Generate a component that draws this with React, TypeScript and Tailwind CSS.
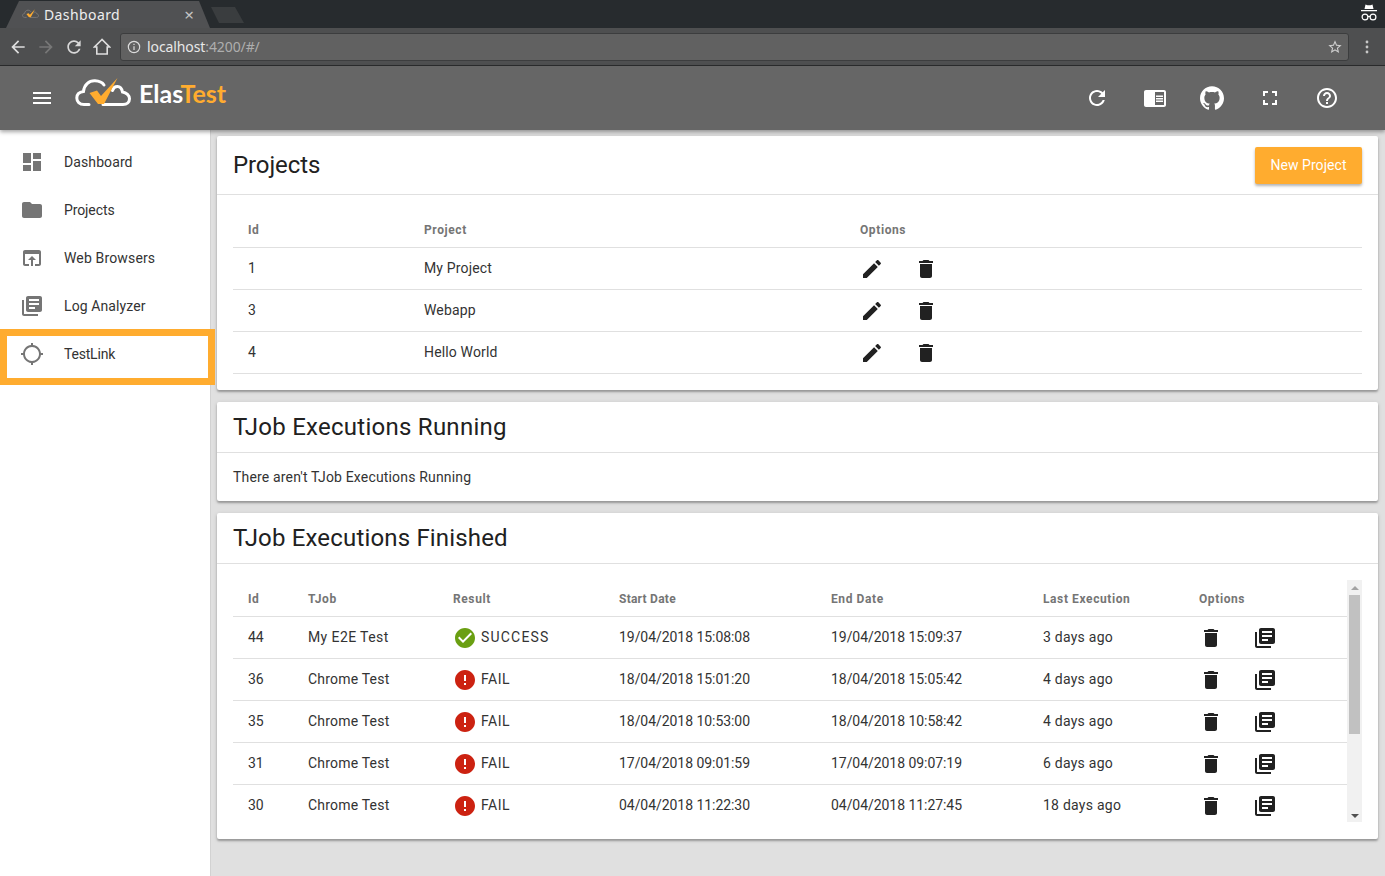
import type { ReactNode } from 'react'

const P = {
  menu: 'M3 18h18v-2H3v2zm0-5h18v-2H3v2zm0-7v2h18V6H3z',
  dashboard: 'M3 13h8V3H3v10zm0 8h8v-6H3v6zm10 0h8V11h-8v10zm0-18v6h8V3h-8z',
  folder: 'M10 4H4c-1.1 0-1.99.9-1.99 2L2 18c0 1.1.9 2 2 2h16c1.1 0 2-.9 2-2V8c0-1.1-.9-2-2-2h-8l-2-2z',
  browser: 'M19 4H5c-1.11 0-2 .9-2 2v12c0 1.1.89 2 2 2h4v-2H5V8h14v10h-4v2h4c1.1 0 2-.9 2-2V6c0-1.1-.89-2-2-2zm-7 6l-4 4h3v6h2v-6h3l-4-4z',
  library: 'M4 6H2v14c0 1.1.9 2 2 2h14v-2H4V6zm16-4H8c-1.1 0-2 .9-2 2v12c0 1.1.9 2 2 2h12c1.1 0 2-.9 2-2V4c0-1.1-.9-2-2-2zm-1 9H9V9h10v2zm-4 4H9v-2h6v2zm4-8H9V5h10v2z',
  gps: 'M20.94 11c-.46-4.17-3.77-7.48-7.94-7.94V1h-2v2.06C6.83 3.52 3.52 6.83 3.06 11H1v2h2.06c.46 4.17 3.77 7.48 7.94 7.94V23h2v-2.06c4.17-.46 7.48-3.77 7.94-7.94H23v-2h-2.06zM12 19c-3.87 0-7-3.13-7-7s3.13-7 7-7 7 3.13 7 7-3.13 7-7 7z',
  edit: 'M3 17.25V21h3.75L17.81 9.94l-3.75-3.75L3 17.25zM20.71 7.04c.39-.39.39-1.02 0-1.41l-2.34-2.34c-.39-.39-1.02-.39-1.41 0l-1.83 1.83 3.75 3.75 1.83-1.83z',
  trash: 'M6 19c0 1.1.9 2 2 2h8c1.1 0 2-.9 2-2V7H6v12zM19 4h-3.5l-1-1h-5l-1 1H5v2h14V4z',
  refresh: 'M17.65 6.35C16.2 4.9 14.21 4 12 4c-4.42 0-7.99 3.58-7.99 8s3.57 8 7.99 8c3.73 0 6.84-2.55 7.73-6h-2.08c-.82 2.33-3.04 4-5.65 4-3.31 0-6-2.69-6-6s2.69-6 6-6c1.66 0 3.14.69 4.22 1.78L13 11h7V4l-2.35 2.35z',
  reader: 'M13 12h7v1.5h-7zm0-2.5h7V11h-7zm0 5h7V16h-7zM21 4H3c-1.1 0-2 .9-2 2v13c0 1.1.9 2 2 2h18c1.1 0 2-.9 2-2V6c0-1.1-.9-2-2-2zm0 15h-9V6h9v13z',
  fullscreen: 'M7 14H5v5h5v-2H7v-3zm-2-4h2V7h3V5H5v5zm12 7h-3v2h5v-5h-2v3zM14 5v2h3v3h2V5h-5z',
  help: 'M11 18h2v-2h-2v2zm1-16C6.48 2 2 6.48 2 12s4.48 10 10 10 10-4.48 10-10S17.52 2 12 2zm0 18c-4.41 0-8-3.59-8-8s3.59-8 8-8 8 3.59 8 8-3.59 8-8 8zm0-14c-2.21 0-4 1.79-4 4h2c0-1.1.9-2 2-2s2 .9 2 2c0 2-3 1.75-3 5h2c0-2.25 3-2.5 3-5 0-2.21-1.79-4-4-4z',
  check: 'M12 2C6.48 2 2 6.48 2 12s4.48 10 10 10 10-4.48 10-10S17.52 2 12 2zm-2 15l-5-5 1.41-1.41L10 14.17l7.59-7.59L19 8l-9 9z',
  error: 'M12 2C6.48 2 2 6.48 2 12s4.48 10 10 10 10-4.48 10-10S17.52 2 12 2zm1 15h-2v-2h2v2zm0-4h-2V7h2v6z',
  github: 'M12 .297c-6.63 0-12 5.373-12 12 0 5.303 3.438 9.8 8.205 11.385.6.113.82-.258.82-.577 0-.285-.01-1.04-.015-2.04-3.338.724-4.042-1.61-4.042-1.61C4.422 18.07 3.633 17.7 3.633 17.7c-1.087-.744.084-.729.084-.729 1.205.084 1.838 1.236 1.838 1.236 1.07 1.835 2.809 1.305 3.495.998.108-.776.417-1.305.76-1.605-2.665-.3-5.466-1.332-5.466-5.93 0-1.31.465-2.38 1.235-3.22-.135-.303-.54-1.523.105-3.176 0 0 1.005-.322 3.3 1.23.96-.267 1.98-.399 3-.405 1.02.006 2.04.138 3 .405 2.28-1.552 3.285-1.23 3.285-1.23.645 1.653.24 2.873.12 3.176.765.84 1.23 1.91 1.23 3.22 0 4.61-2.805 5.625-5.475 5.92.42.36.81 1.096.81 2.22 0 1.606-.015 2.896-.015 3.286 0 .315.21.69.825.57C20.565 22.092 24 17.592 24 12.297c0-6.627-5.373-12-12-12',
  back: 'M20 11H7.83l5.59-5.59L12 4l-8 8 8 8 1.41-1.41L7.83 13H20v-2z',
  forward: 'M12 4l-1.41 1.41L16.17 11H4v2h12.17l-5.58 5.59L12 20l8-8z',
  star: 'M22 9.24l-7.19-.62L12 2 9.19 8.63 2 9.24l5.46 4.73L5.82 21 12 17.27 18.18 21l-1.63-7.03L22 9.24zM12 15.4l-3.76 2.27 1-4.28-3.32-2.88 4.38-.38L12 6.1l1.71 3.99 4.38.38-3.32 2.88 1 4.28L12 15.4z',
}

function Icon({ d, className }: { d: string; className?: string }) {
  return (
    <svg viewBox="0 0 24 24" fill="currentColor" className={className}>
      <path d={d} />
    </svg>
  )
}

function Logo({ className, cloud = 'white' }: { className?: string; cloud?: string }) {
  return (
    <svg viewBox="0 0 56 34" fill="none" className={className}>
      <path
        d="M14 26.500H9C4.500 26.500 1.800 23.500 1.800 20 1.800 16.500 4.500 14 8.500 13.500 9 7 14 2.500 20 2.800 24 3 27 4 29 7M37.500 12.500C39 7.500 46 6.500 47.500 14 51.500 14.500 54.500 17.500 54.500 20.800 54.500 24 52 26.500 48 26.500H28"
        stroke={cloud}
        strokeWidth="3"
        strokeLinecap="round"
      />
      <path d="M14.500 15l7.500-2.500 4 5.500L42.500 0 29 26h-6z" fill="#ffac2f" />
    </svg>
  )
}

function BrowserChrome() {
  return (
    <div className="shrink-0 bg-[#4e4f50] text-[#dcdcdc] font-['Noto_Sans',sans-serif]">
      <div className="relative flex h-[28px] items-end bg-[#272b2e] pl-[6px]">
        <div className="flex h-[27px] w-[204px] items-center bg-[#505153] pl-[16px] pr-[16px] [clip-path:polygon(0_100%,13px_0,193px_0,100%_100%)]">
          <Logo cloud="#7a7a7a" className="h-[11px] w-[17px]" />
          <span className="ml-[5px] text-[14px] tracking-[0.4px] text-[#eeeeee]">Dashboard</span>
          <span className="ml-auto text-[17px] leading-none text-[#c4c4c4]">×</span>
        </div>
        <div className="mb-[5px] ml-[1px] h-[16px] w-[33px] bg-[#3a3d3f] [clip-path:polygon(8px_100%,0_0,24px_0,100%_100%)]"></div>
        <svg viewBox="0 0 18 20" className="absolute right-[7px] top-[3px] h-[20px] w-[18px]">
          <path d="M4.500 6 5.500 1.500 7.500 2.300h3l2-.800 1 4.500zM1 7h16v1.200H1z" fill="white" />
          <circle cx="5" cy="14" r="2.900" fill="none" stroke="white" strokeWidth="1.200" />
          <circle cx="13" cy="14" r="2.900" fill="none" stroke="white" strokeWidth="1.200" />
          <path d="M7.800 13.500h2.400" stroke="white" strokeWidth="1.200" />
        </svg>
      </div>
      <div className="flex h-[38px] items-center border-b border-[#2b2c2d] pl-[8px] pr-[16px]">
        <Icon d={P.back} className="h-[20px] w-[20px] text-[#dedede]" />
        <Icon d={P.forward} className="ml-[8px] h-[20px] w-[20px] text-[#777]" />
        <Icon d={P.refresh} className="ml-[8px] h-[20px] w-[20px] text-[#d8d8d8]" />
        <svg viewBox="0 0 18 18" fill="none" stroke="#dedede" strokeWidth="1.600" className="ml-[9px] h-[18px] w-[18px]">
          <path d="M9 1.500 1.500 9h2.300v7h10.400V9h2.300z" />
        </svg>
        <div className="ml-[9px] flex h-[28px] flex-1 items-center rounded-[3px] border border-[#3c3d3e] bg-[#616161] pl-[6px] pr-[5px] text-[14px] tracking-[-0.1px]">
          <svg viewBox="0 0 16 16" fill="none" className="h-[14px] w-[14px]">
            <circle cx="8" cy="8" r="6.500" stroke="#dcdcdc" strokeWidth="1.300" />
            <path d="M7.300 7h1.400v4.500H7.300zM7.300 4.300h1.400v1.400H7.300z" fill="#dcdcdc" />
          </svg>
          <span className="ml-[6px] text-[#e8e8e8]">localhost</span>
          <span className="text-[#aeaeae]">:4200/#/</span>
          <Icon d={P.star} className="ml-auto h-[16px] w-[16px] text-[#d0d0d0]" />
        </div>
        <svg viewBox="0 0 4 14" className="ml-[16px] h-[14px] w-[4px]" fill="#c8c8c8">
          <circle cx="2" cy="2" r="1.400" />
          <circle cx="2" cy="7" r="1.400" />
          <circle cx="2" cy="12" r="1.400" />
        </svg>
      </div>
    </div>
  )
}

function AppHeader() {
  const icons = [P.refresh, P.reader, P.github, P.fullscreen, P.help]
  return (
    <header className="relative z-20 flex h-[64px] shrink-0 items-center bg-[#666666] pl-[30px] pr-[46px] text-white shadow-[0_2px_4px_rgba(0,0,0,0.35)]">
      <Icon d={P.menu} className="h-[24px] w-[24px]" />
      <Logo className="mb-[7px] ml-[21px] h-[34px] w-[56px]" />
      <span className="mb-[10px] ml-[8px] font-['Lato',sans-serif] text-[25px] font-bold leading-none">
        Elas<span className="text-[#ffac2f]">Test</span>
      </span>
      <div className="ml-auto flex gap-[33.5px]">
        {icons.map((d) => (
          <Icon key={d} d={d} className="h-[24px] w-[24px]" />
        ))}
      </div>
    </header>
  )
}

const navItems = [
  { label: 'Dashboard', d: P.dashboard, track: 'tracking-[0.1px]' },
  { label: 'Projects', d: P.folder, track: 'tracking-[-0.1px]' },
  { label: 'Web Browsers', d: P.browser, track: 'tracking-[0.15px]' },
  { label: 'Log Analyzer', d: P.library, track: 'tracking-[0.1px]' },
  { label: 'TestLink', d: P.gps, track: 'tracking-[-0.2px]' },
]

function Sidebar() {
  return (
    <aside className="w-[211px] shrink-0 border-r border-[#d2d2d2] bg-white pt-[8px]">
      {navItems.map((it) => (
        <div key={it.label} className="relative flex h-[48px] items-center pl-[20px] text-[14px] text-[#333333]">
          <Icon d={it.d} className="h-[24px] w-[24px] text-[#757575]" />
          <span className={`ml-[20px] ${it.track}`}>{it.label}</span>
          {it.label === 'TestLink' && (
            <div className="absolute left-0 top-[-1px] z-10 h-[56px] w-[215px] border-[7px] border-[#ffac2f]"></div>
          )}
        </div>
      ))}
    </aside>
  )
}

function Card({ children, className }: { children: ReactNode; className?: string }) {
  return (
    <section
      className={`rounded-[2px] bg-white shadow-[0_2px_2px_rgba(0,0,0,0.25),0_1px_4px_rgba(0,0,0,0.15)] ${className ?? ''}`}
    >
      {children}
    </section>
  )
}

function CardTitle({ children, track }: { children: ReactNode; track: string }) {
  return (
    <div className={`flex h-[51px] items-center border-b border-[#e0e0e0] pl-[16px] text-[24px] text-[#212121] ${track}`}>
      {children}
    </div>
  )
}

const headCls = 'flex h-[37px] items-center border-b border-[#e0e0e0] pl-[15px] pt-[2px] text-[12px] font-bold tracking-[0.6px] text-[#757575]'
const rowCls = 'flex h-[42px] items-center border-b border-[#e0e0e0] pl-[15px] text-[14px] text-[#333333]'

const projects = [
  ['1', 'My Project'],
  ['3', 'Webapp'],
  ['4', 'Hello World'],
]

const finished = [
  ['44', 'My E2E Test', 'SUCCESS', '19/04/2018 15:08:08', '19/04/2018 15:09:37', '3 days ago'],
  ['36', 'Chrome Test', 'FAIL', '18/04/2018 15:01:20', '18/04/2018 15:05:42', '4 days ago'],
  ['35', 'Chrome Test', 'FAIL', '18/04/2018 10:53:00', '18/04/2018 10:58:42', '4 days ago'],
  ['31', 'Chrome Test', 'FAIL', '17/04/2018 09:01:59', '17/04/2018 09:07:19', '6 days ago'],
  ['30', 'Chrome Test', 'FAIL', '04/04/2018 11:22:30', '04/04/2018 11:27:45', '18 days ago'],
]

function ProjectsCard() {
  return (
    <Card className="h-[254px]">
      <div className="flex h-[59px] items-center justify-between border-b border-[#e0e0e0] px-[16px] text-[24px] tracking-[-0.1px] text-[#212121]">
        Projects
        <button className="h-[37px] w-[107px] rounded-[2px] bg-[#ffac2f] text-[14px] tracking-[0.05px] text-white shadow-[0_2px_3px_rgba(0,0,0,0.3)]">
          New Project
        </button>
      </div>
      <div className="px-[16px] pt-[16px]">
        <div className={headCls}>
          <span className="w-[176px]">Id</span>
          <span className="w-[436px]">Project</span>
          <span>Options</span>
        </div>
        {projects.map(([id, name]) => (
          <div key={id} className={rowCls}>
            <span className="w-[176px]">{id}</span>
            <span className="w-[436px] tracking-[0.15px]">{name}</span>
            <span className="flex gap-[30px] text-[#212121]">
              <Icon d={P.edit} className="h-[24px] w-[24px]" />
              <Icon d={P.trash} className="h-[24px] w-[24px]" />
            </span>
          </div>
        ))}
      </div>
    </Card>
  )
}

function Scrollbar() {
  return (
    <div className="flex h-[242px] w-[15px] shrink-0 flex-col items-center bg-[#f1f1f1]">
      <svg viewBox="0 0 8 4" className="mt-[6px] h-[4px] w-[8px]" fill="#a3a3a3">
        <path d="M0 4 4 0l4 4z" />
      </svg>
      <div className="mt-[5px] h-[139px] w-[11px] bg-[#c1c1c1]"></div>
      <svg viewBox="0 0 8 4" className="mb-[4px] mt-auto h-[4px] w-[8px]" fill="#505050">
        <path d="M0 0h8L4 4z" />
      </svg>
    </div>
  )
}

function FinishedCard() {
  return (
    <Card className="h-[326px]">
      <CardTitle track="tracking-[0.17px]">TJob Executions Finished</CardTitle>
      <div className="flex px-[16px] pt-[16px]">
        <div className="h-[242px] flex-1 overflow-hidden">
          <div className={headCls}>
            <span className="w-[60px]">Id</span>
            <span className="w-[145px]">TJob</span>
            <span className="w-[166px]">Result</span>
            <span className="w-[212px] tracking-[0.25px]">Start Date</span>
            <span className="w-[212px]">End Date</span>
            <span className="w-[156px]">Last Execution</span>
            <span>Options</span>
          </div>
          {finished.map(([id, job, result, start, end, last]) => (
            <div key={id} className={rowCls}>
              <span className="w-[60px]">{id}</span>
              <span className={job === 'My E2E Test' ? 'w-[145px] tracking-[0.4px]' : 'w-[145px] tracking-[0.2px]'}>{job}</span>
              <span className="flex w-[166px] items-center">
                <Icon
                  d={result === 'SUCCESS' ? P.check : P.error}
                  className={result === 'SUCCESS' ? 'h-[24px] w-[24px] text-[#6a9f12]' : 'h-[24px] w-[24px] text-[#cc2211]'}
                />
                <span className={result === 'SUCCESS' ? 'ml-[4px] tracking-[1.2px]' : 'ml-[4px] tracking-[0.5px]'}>{result}</span>
              </span>
              <span className="w-[212px] tracking-[-0.05px]">{start}</span>
              <span className="w-[212px] tracking-[-0.05px]">{end}</span>
              <span className="w-[156px] tracking-[0.25px]">{last}</span>
              <span className="flex gap-[30px] text-[#212121]">
                <Icon d={P.trash} className="h-[24px] w-[24px]" />
                <Icon d={P.library} className="h-[24px] w-[24px]" />
              </span>
            </div>
          ))}
        </div>
        <Scrollbar />
      </div>
    </Card>
  )
}

export default function App() {
  return (
    <div className="flex h-[876px] w-[1385px] flex-col overflow-hidden font-['Roboto',sans-serif]">
      <BrowserChrome />
      <AppHeader />
      <div className="flex min-h-0 flex-1">
        <Sidebar />
        <main className="flex flex-1 flex-col gap-[12px] bg-[#e0e0e0] pl-[6px] pr-[7px] pt-[6px]">
          <ProjectsCard />
          <Card className="h-[99px]">
            <CardTitle track="tracking-[0.26px]">TJob Executions Running</CardTitle>
            <div className="pl-[16px] pt-[14px] text-[14px] tracking-[0.17px] text-[#333333]">There aren't TJob Executions Running</div>
          </Card>
          <FinishedCard />
        </main>
      </div>
    </div>
  )
}
